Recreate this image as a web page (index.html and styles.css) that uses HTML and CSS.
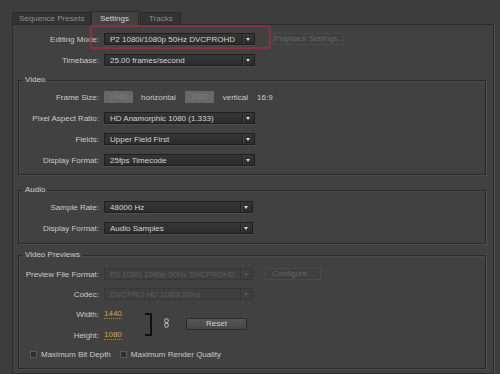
FILE: index.html
```html
<!DOCTYPE html>
<html>
<head>
<meta charset="utf-8">
<link rel="stylesheet" href="styles.css">
</head>
<body>
<div class="tabs">
  <div class="tab first">Sequence Presets</div>
  <div class="tab active">Settings</div>
  <div class="tab last">Tracks</div>
</div>
<div class="panel">
  <div class="row top">
    <span class="label">Editing Mode:</span>
    <div class="select"><span class="val">P2 1080i/1080p 50Hz DVCPROHD</span><span class="arrow"></span></div>
    <div class="btn disabled playback">Playback Settings...</div>
    <div class="highlight"></div>
  </div>
  <div class="row top">
    <span class="label">Timebase:</span>
    <div class="select"><span class="val">25.00 frames/second</span><span class="arrow"></span></div>
  </div>

  <fieldset class="group video">
    <legend>Video</legend>
    <div class="row">
      <span class="label">Frame Size:</span>
      <span class="num">1440</span>
      <span class="txt h">horizontal</span>
      <span class="num">1080</span>
      <span class="txt v">vertical</span>
      <span class="txt ratio">16:9</span>
    </div>
    <div class="row">
      <span class="label">Pixel Aspect Ratio:</span>
      <div class="select"><span class="val">HD Anamorphic 1080 (1.333)</span><span class="arrow"></span></div>
    </div>
    <div class="row">
      <span class="label">Fields:</span>
      <div class="select"><span class="val">Upper Field First</span><span class="arrow"></span></div>
    </div>
    <div class="row">
      <span class="label">Display Format:</span>
      <div class="select"><span class="val">25fps Timecode</span><span class="arrow"></span></div>
    </div>
  </fieldset>

  <fieldset class="group audio">
    <legend>Audio</legend>
    <div class="row">
      <span class="label">Sample Rate:</span>
      <div class="select short"><span class="val">48000 Hz</span><span class="arrow"></span></div>
    </div>
    <div class="row">
      <span class="label">Display Format:</span>
      <div class="select short"><span class="val">Audio Samples</span><span class="arrow"></span></div>
    </div>
  </fieldset>

  <fieldset class="group previews">
    <legend>Video Previews</legend>
    <div class="row">
      <span class="label">Preview File Format:</span>
      <div class="select short disabled"><span class="val">P2 1080i 1080p 50Hz DVCPROHD</span><span class="arrow"></span></div>
      <div class="btn disabled configure">Configure...</div>
    </div>
    <div class="row">
      <span class="label">Codec:</span>
      <div class="select short disabled"><span class="val">DVCPRO HD 1080i 50Hz</span><span class="arrow"></span></div>
    </div>
    <div class="wh">
      <div class="wh-fields">
        <div class="row"><span class="label">Width:</span><span class="hot">1440</span></div>
        <div class="row"><span class="label">Height:</span><span class="hot">1080</span></div>
      </div>
      <div class="bracket"></div>
      <svg class="link" width="5" height="10" viewBox="0 0 5 10">
        <rect x="0.75" y="0.75" width="3.5" height="4" rx="1.6" fill="none" stroke="#c8c8c8" stroke-width="1"/>
        <rect x="0.75" y="5.25" width="3.5" height="4" rx="1.6" fill="none" stroke="#c8c8c8" stroke-width="1"/>
      </svg>
      <div class="btn reset">Reset</div>
    </div>
    <div class="checks">
      <span class="check"><span class="box"></span>Maximum Bit Depth</span>
      <span class="check"><span class="box"></span>Maximum Render Quality</span>
    </div>
  </fieldset>
</div>
</body>
</html>
```

FILE: styles.css
```css
html, body {
  margin: 0;
  padding: 0;
  height: 374px;
  overflow: hidden;
}
body {
  background: #3d3d3d;
  font-family: "Liberation Sans", Arial, sans-serif;
  font-size: 8px;
  color: #cccccc;
}
.tabs {
  display: flex;
  align-items: flex-end;
  padding-left: 12px;
  padding-top: 11px;
  height: 13px;
  position: relative;
  z-index: 1;
}
.tab {
  height: 11px;
  line-height: 11px;
  background: #333333;
  color: #8c8c8c;
  border: 1px solid #2c2c2c;
  border-bottom: none;
  white-space: nowrap;
  flex: none;
}
.tab.first { padding: 0 6px 0 6px; width: 65px; }
.tab.active {
  height: 13px;
  line-height: 14px;
  background: #414141;
  color: #d4d4d4;
  padding: 0 9px 0 8px;
  width: 29px;
  border-color: #2b2b2b;
  margin-bottom: -1px;
}
.tab.last { padding: 0 7px 0 8px; width: 24px; margin-left: 1px; }

.panel {
  margin-left: 12px;
  width: 468px;
  height: 340px;
  overflow: hidden;
  background: #414141;
  border: 1px solid #2b2b2b;
  box-shadow: 1px 0 0 #525252;
  padding: 8px 7px 0 5px;
}
.row {
  display: flex;
  align-items: center;
  height: 12px;
  margin-bottom: 9px;
  position: relative;
}
.label {
  width: 80px;
  text-align: right;
  margin-right: 5px;
  color: #c9c9c9;
  white-space: nowrap;
  flex: none;
}
.row.top .label {
  width: 81px;
}
.select {
  width: 149px;
  height: 10px;
  display: flex;
  align-items: center;
  background: linear-gradient(#363636, #2c2c2c);
  border: 1px solid #1f1f1f;
  box-shadow: 0 1px 0 #4d4d4d;
  color: #d2d2d2;
  flex: none;
}
.select.short { width: 147px; }
.select .val {
  flex: 1;
  padding-left: 5px;
  white-space: nowrap;
  overflow: hidden;
}
.select .arrow {
  width: 11px;
  height: 10px;
  border-left: 1px solid #202020;
  box-shadow: inset 1px 0 0 #444;
  position: relative;
}
.select .arrow::after {
  content: "";
  position: absolute;
  left: 3px;
  top: 4px;
  border-left: 2.5px solid transparent;
  border-right: 2.5px solid transparent;
  border-top: 3px solid #d8d8d8;
}
.select.disabled {
  background: #3f3f3f;
  border-color: #373737;
  box-shadow: none;
  color: #5d5d5d;
}
.select.disabled .arrow { border-left-color: #373737; box-shadow: none; }
.select.disabled .arrow::after { border-top-color: #5a5a5a; }

.btn {
  height: 10px;
  line-height: 10px;
  text-align: center;
  border: 1px solid #2a2a2a;
  background: linear-gradient(#565656, #474747);
  color: #d0d0d0;
  flex: none;
  white-space: nowrap;
  overflow: hidden;
}
.btn.disabled {
  background: #3f3f3f;
  border-color: #4a4a4a;
  color: #666;
}
.playback {
  width: 69px;
  margin-left: 18px;
}
.configure {
  width: 54px;
  margin-left: 12px;
}
.highlight {
  position: absolute;
  left: 72px;
  top: -8px;
  width: 177px;
  height: 20px;
  border: 2px solid rgba(160, 45, 65, 0.75);
  border-radius: 4px;
  box-shadow: 0 0 2px rgba(160, 45, 65, 0.5);
}

.group {
  margin: 0;
  padding: 6px 0 7px 0;
  border: 1px solid #2a2a2a;
  box-shadow: 1px 1px 0 #4e4e4e, inset 1px 1px 0 #4a4a4a;
  min-width: 0;
}
.group legend {
  margin-left: 4px;
  padding: 0 2px;
  line-height: 10px;
  color: #c9c9c9;
}
.group .row:last-child { margin-bottom: 0; }
.video { margin-top: 7px; padding-bottom: 8px; }
.audio { margin-top: 10px; padding-bottom: 9px; }
.previews { margin-top: 6px; padding-top: 8px; padding-bottom: 9px; }
.previews .row { margin-bottom: 8px; }

.num {
  width: 29px;
  height: 12px;
  line-height: 12px;
  background: #686868;
  color: #7b7b7b;
  text-align: center;
  flex: none;
}
.txt { color: #c9c9c9; }
.txt.h { margin: 0 9px 0 8px; }
.txt.v { margin-left: 9px; }
.txt.ratio { margin-left: 9px; }

.wh {
  display: flex;
  align-items: center;
  margin-bottom: 8px;
}
.wh-fields { width: 126px; }
.wh-fields .row { margin-bottom: 9px; }
.wh-fields .row:last-child { margin-bottom: 0; }
.hot {
  color: #d6a23c;
  border-bottom: 1px dotted #b08030;
  line-height: 9px;
}
.bracket {
  width: 5px;
  height: 19px;
  border: 2px solid #111;
  border-left: none;
}
.link {
  margin-left: 12px;
  margin-top: -3px;
}
.reset {
  width: 59px;
  margin-left: 17px;
  margin-top: -1px;
}
.checks {
  display: flex;
  align-items: center;
  height: 10px;
  padding-left: 11px;
}
.check {
  display: flex;
  align-items: center;
  margin-right: 9px;
  color: #c9c9c9;
}
.box {
  width: 5px;
  height: 5px;
  border: 1px solid #5a5a5a;
  background: #2e2e2e;
  margin-right: 4px;
}
```
